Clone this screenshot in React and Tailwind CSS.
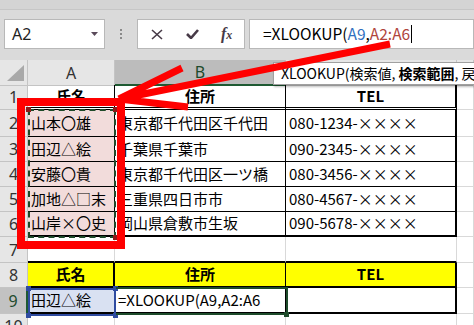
import React from 'react';

const ROWS = [
  ['山本〇雄', '東京都千代田区千代田', '080-1234-××××'],
  ['田辺△絵', '千葉県千葉市', '090-2345-××××'],
  ['安藤〇貴', '東京都千代田区一ツ橋', '080-3456-××××'],
  ['加地△□末', '三重県四日市市', '080-4567-××××'],
  ['山岸×〇史', '岡山県倉敷市生坂', '090-5678-××××'],
];
const ROW_H = ['h-[27px]', 'h-[25px]', 'h-[25px]', 'h-[25px]', 'h-[25px]'];

const colHead = "flex items-center justify-center bg-[#e6e6e6] border-r border-b border-[#c4c4c4] text-[16px] text-[#333] font-['Noto_Sans',sans-serif]";
const colHeadSel = "flex items-center justify-center bg-[#bcbcbc] border-r border-r-[#c4c4c4] border-b-2 border-b-[#1e5a32] text-[16px] text-[#1e4a2c] font-['Noto_Sans',sans-serif]";
const rowHead = "flex items-center justify-center bg-[#e6e6e6] border-r border-b border-[#c4c4c4] text-[16px] text-[#333] font-['Noto_Sans',sans-serif]";
const rowHeadSel = "flex items-center justify-center bg-[#c2c2c2] border-r-2 border-r-[#1e5a32] border-b border-b-[#c4c4c4] text-[16px] text-[#1e4a2c] font-['Noto_Sans',sans-serif]";
const cell = 'flex items-center pl-[3px] overflow-hidden whitespace-nowrap text-[15px] text-black';
const head = 'flex items-center justify-center overflow-hidden whitespace-nowrap text-[15px] font-bold text-black';
const grid = 'border-r border-b border-[#d9d9d9]';

function Row({ h, n, sel, children }) {
  return (
    <div className={`grid grid-cols-[28px_87px_171px_171px_17px] ${h}`}>
      <div className={sel ? rowHeadSel : rowHead}>{n}</div>
      {children}
    </div>
  );
}

function Corner({ className }) {
  return <div className={`absolute w-[5px] h-[5px] ${className}`} />;
}

export default function App() {
  return (
    <div className="relative w-[474px] h-[325px] overflow-hidden bg-white font-['Noto_Sans_CJK_JP',sans-serif]">
      {/* formula bar */}
      <div className="h-[60px] bg-[#dadada]">
        <div className="h-[10px] bg-[#d4d4d4] border-b border-[#c6c6c6]" />
        <div className="flex items-center h-[30px] mt-[9px]">
          <div className="ml-[4px] w-[101px] h-[30px] bg-white border border-[#b8b8b8] flex items-center justify-between pl-[7px] pr-[6px]">
            <span className="text-[16px] text-[#222] font-['Noto_Sans',sans-serif]">A2</span>
            <svg width="7" height="4" viewBox="0 0 7 4"><path d="M0 0h7L3.5 4z" fill="#5a4a5a" /></svg>
          </div>
          <div className="w-[32px] flex flex-col items-center gap-[2px]">
            <span className="w-[2px] h-[2px] bg-[#8a8a8a]" />
            <span className="w-[2px] h-[2px] bg-[#8a8a8a]" />
            <span className="w-[2px] h-[2px] bg-[#8a8a8a]" />
          </div>
          <div className="w-[108px] h-[30px] bg-white border border-[#b8b8b8] flex items-center">
            <svg className="ml-[13px]" width="12" height="11" viewBox="0 0 12 11">
              <path d="M1 1l10 9M11 1L1 10" stroke="#473a47" strokeWidth="1.6" fill="none" />
            </svg>
            <svg className="ml-[23px]" width="13" height="10" viewBox="0 0 13 10">
              <path d="M1 5l4 4 7-8" stroke="#473a47" strokeWidth="2.6" fill="none" />
            </svg>
            <span className="ml-[22px] text-[16px] leading-none italic font-bold font-['Liberation_Serif',serif] text-[#473a47]">f<span className="text-[12px]">x</span></span>
          </div>
          <div className="ml-[4px] flex-1 h-[30px] bg-white border border-[#b8b8b8] flex items-center pl-[13px] text-[15.5px]">
            <span className="text-black">=XLOOKUP(</span>
            <span className="text-[#2f6fc0]">A9</span>
            <span className="text-black">,</span>
            <span className="text-[#b0453c]">A2:A6</span>
            <span className="w-px h-[18px] bg-black ml-[1px]" />
          </div>
        </div>
      </div>

      {/* column headers */}
      <div className="grid grid-cols-[28px_87px_171px_171px_17px] h-[25px]">
        <div className={`${colHead} relative`}>
          <svg className="absolute left-[7px] top-[5px]" width="17" height="16" viewBox="0 0 17 16">
            <path d="M17 0V16H0z" fill="#a9a9a9" />
          </svg>
        </div>
        <div className={colHead}>A</div>
        <div className={colHeadSel}>B</div>
        <div className={colHead} />
        <div className={colHead} />
      </div>

      <Row h="h-[25px]" n="1">
        <div className={`${head} border-r border-b-[3px] border-double border-black`}>氏名</div>
        <div className={`${head} border-r border-b-[3px] border-double border-black`}>住所</div>
        <div className={`${head} border-r-2 border-b-[3px] border-double border-black`}>TEL</div>
        <div className={grid} />
      </Row>

      {ROWS.map((r, i) => (
        <Row key={i} h={ROW_H[i]} n={i + 2}>
          <div className={`${cell} bg-[#f2dcdb] border-r border-black ${i === 4 ? 'border-b-2' : 'border-b'}`}>{r[0]}</div>
          <div className={`${cell} border-r border-black ${i === 4 ? 'border-b-2' : 'border-b'}`}>{r[1]}</div>
          <div className={`${cell} border-r-2 border-black ${i === 4 ? 'border-b-2' : 'border-b'}`}>{r[2]}</div>
          <div className={grid} />
        </Row>
      ))}

      <Row h="h-[26px]" n="7">
        <div className="border-r border-r-[#d9d9d9] border-b-2 border-b-black" />
        <div className="border-r border-r-[#d9d9d9] border-b-2 border-b-black" />
        <div className="border-r border-r-[#d9d9d9] border-b-2 border-b-black" />
        <div className={grid} />
      </Row>

      <Row h="h-[25px]" n="8">
        <div className={`${head} bg-[#ffff00] border-r-2 border-b-2 border-black`}>氏名</div>
        <div className={`${head} bg-[#ffff00] border-r border-b-2 border-black`}>住所</div>
        <div className={`${head} bg-[#ffff00] border-r-2 border-b-2 border-black`}>TEL</div>
        <div className={grid} />
      </Row>

      <Row h="h-[26px]" n="9" sel>
        <div className={`${cell} bg-[#d9e1f2] border-r border-b-2 border-black`}>田辺△絵</div>
        <div className={`${cell} border-r border-b-2 border-black`}>=XLOOKUP(A9,A2:A6</div>
        <div className={`${cell} border-r-2 border-b-2 border-black`} />
        <div className={grid} />
      </Row>

      <Row h="h-[25px]" n="10">
        <div className={grid} />
        <div className={grid} />
        <div className={grid} />
        <div className={grid} />
      </Row>

      {/* reference range A2:A6 */}
      <div className="absolute left-[28px] top-[109px] w-[88px] h-[129px] border-2 border-dashed border-[#1f4a2a]" />
      <Corner className="left-[26px] top-[107px] bg-[#8e1b1b]" />
      <Corner className="left-[113px] top-[107px] bg-[#8e1b1b]" />
      <Corner className="left-[113px] top-[235px] bg-[#8e1b1b]" />

      {/* reference A9 */}
      <div className="absolute left-[28px] top-[288px] w-[88px] h-[28px] border-2 border-[#2f4ba0]" />
      <Corner className="left-[26px] top-[286px] bg-[#2f4ba0]" />
      <Corner className="left-[113px] top-[286px] bg-[#2f4ba0]" />
      <Corner className="left-[26px] top-[313px] bg-[#2f4ba0]" />
      <Corner className="left-[113px] top-[313px] bg-[#2f4ba0]" />

      {/* active cell B9 */}
      <div className="absolute left-[116px] top-[287px] w-[172px] h-[28px] border-2 border-l-0 border-[#1d4b2a]" />
      <Corner className="left-[284px] top-[312px] bg-[#1d4b2a]" />

      {/* function tooltip */}
      <div className="absolute left-[273px] top-[62px] w-[201px] h-[23px] overflow-hidden bg-white border border-r-0 border-[#a0a0a0] shadow-[1px_2px_2px_rgba(0,0,0,0.25)] flex items-center pl-[7px] whitespace-nowrap text-[14px] text-black">
        <span>XLOOKUP(検索値,&nbsp;</span>
        <span className="font-bold">検索範囲</span>
        <span>,&nbsp;戻り値範囲</span>
      </div>

      {/* red annotation */}
      <svg className="absolute left-0 top-0 pointer-events-none" width="474" height="325" viewBox="0 0 474 325">
        <rect x="21" y="102" width="100" height="143" fill="none" stroke="#ff0000" strokeWidth="8" />
        <path d="M390 44L119 99M182 68L119 99M188 107L119 99" stroke="#ff0000" strokeWidth="7" fill="none" />
      </svg>
    </div>
  );
}
